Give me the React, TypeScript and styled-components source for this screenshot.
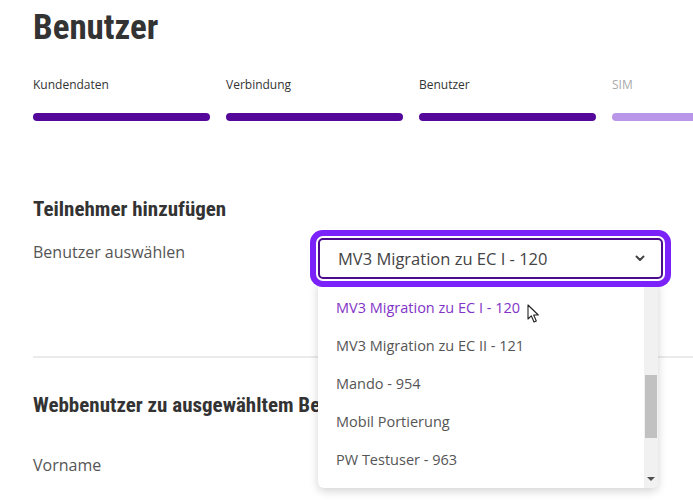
import React from 'react';
import styled, { createGlobalStyle } from 'styled-components';

const GlobalStyle = createGlobalStyle`
	html {
		overflow: hidden;
	}
	body {
		margin: 0;
		padding: 0;
		background: #fff;
		font-family: 'Open Sans', 'Liberation Sans', sans-serif;
		color: #555;
	}
`;

const condensed = `'Roboto Condensed', 'Liberation Sans Narrow', 'DejaVu Sans Condensed', 'Roboto', sans-serif`;

const Page = styled.div`
	width: 1000px;
	min-height: 501px;
	padding: 6px 0 0 33px;
	box-sizing: border-box;
`;

const PageTitle = styled.h1`
	margin: 0;
	font-family: ${condensed};
	font-weight: 700;
	font-size: 35px;
	line-height: 44px;
	color: #333;
`;

const Steps = styled.div`
	display: grid;
	grid-template-columns: repeat(4, 177px);
	column-gap: 16px;
	margin-top: 26px;
`;

const Step = styled.div<{ $done: boolean }>`
	display: flex;
	flex-direction: column;
	gap: 20px;
	font-size: 12px;
	line-height: 17px;
	color: ${(p) => (p.$done ? '#333' : '#aaa')};
`;

const StepBar = styled.div<{ $done: boolean }>`
	height: 8px;
	border-radius: 4px;
	background: ${(p) => (p.$done ? '#55079a' : '#ba96e8')};
`;

const SectionTitle = styled.h2<{ $top: number }>`
	margin: ${(p) => p.$top}px 0 0;
	font-family: ${condensed};
	font-weight: 700;
	font-size: 21px;
	line-height: 24px;
	color: #333;
`;

const FormRow = styled.div`
	display: grid;
	grid-template-columns: 285px 345px;
	align-items: start;
	margin-top: 14px;
`;

const FieldLabel = styled.div<{ $top?: number }>`
	font-size: 16px;
	line-height: 24px;
	color: #555;
	padding-top: ${(p) => p.$top ?? 5}px;
`;

const SelectWrap = styled.div`
	position: relative;
	margin-top: 3px;
`;

const SelectBox = styled.div`
	height: 41px;
	box-sizing: border-box;
	display: flex;
	align-items: center;
	justify-content: space-between;
	padding: 0 16px 0 18px;
	border: 2px solid #4c0b8e;
	border-radius: 5px;
	background: #fff;
	font-size: 16.5px;
	color: #444;
	box-shadow: 0 0 0 2px #fff, 0 0 0 8px #7b22fb;
	position: relative;
	z-index: 2;
`;

const Dropdown = styled.div`
	position: absolute;
	top: 43px;
	left: 0;
	width: 340px;
	height: 207px;
	display: flex;
	background: #fff;
	border-radius: 0 0 6px 6px;
	box-shadow: 0 3px 10px rgba(0, 0, 0, 0.18);
	z-index: 1;
	overflow: hidden;
`;

const OptionList = styled.ul`
	flex: 1;
	list-style: none;
	margin: 0;
	padding: 7px 0 0;
`;

const Option = styled.li<{ $active?: boolean }>`
	height: 38px;
	display: flex;
	align-items: center;
	padding-left: 18px;
	font-size: 14.5px;
	color: ${(p) => (p.$active ? '#8234c6' : '#555')};
	position: relative;
`;

const Scrollbar = styled.div`
	width: 14px;
	display: flex;
	flex-direction: column;
	align-items: center;
	background: #f1f1f1;
	padding-top: 94px;
`;

const Thumb = styled.div`
	width: 12px;
	height: 63px;
	background: #c1c1c1;
`;

const ArrowDown = styled.div`
	margin-top: auto;
	margin-bottom: 7px;
	width: 0;
	height: 0;
	border-left: 4px solid transparent;
	border-right: 4px solid transparent;
	border-top: 4px solid #505050;
`;

const Cursor = styled.svg`
	position: absolute;
	left: 209px;
	top: 16px;
`;

const Divider = styled.hr`
	margin: 77px 0 0;
	border: none;
	border-top: 2px solid #ebebeb;
`;

const Chevron = () => (
	<svg width="10" height="7" viewBox="0 0 10 7">
		<path d="M1.5 1.5 L5 5 L8.5 1.5" fill="none" stroke="#444" strokeWidth="2" strokeLinecap="round" strokeLinejoin="round" />
	</svg>
);

const steps = [
	{ label: 'Kundendaten', done: true },
	{ label: 'Verbindung', done: true },
	{ label: 'Benutzer', done: true },
	{ label: 'SIM', done: false },
];

const options = [
	'MV3 Migration zu EC I - 120',
	'MV3 Migration zu EC II - 121',
	'Mando - 954',
	'Mobil Portierung',
	'PW Testuser - 963',
];

const App = () => {
	return (
		<>
			<GlobalStyle />
			<Page>
				<PageTitle>Benutzer</PageTitle>
				<Steps>
					{steps.map((s) => (
						<Step key={s.label} $done={s.done}>
							{s.label}
							<StepBar $done={s.done} />
						</Step>
					))}
				</Steps>

				<SectionTitle $top={76}>Teilnehmer hinzufügen</SectionTitle>
				<FormRow>
					<FieldLabel>Benutzer auswählen</FieldLabel>
					<SelectWrap>
						<SelectBox>
							MV3 Migration zu EC I - 120
							<Chevron />
						</SelectBox>
						<Dropdown>
							<OptionList>
								{options.map((o, i) => (
									<Option key={o} $active={i === 0}>
										{o}
										{i === 0 && (
											<Cursor width="13" height="20" viewBox="0 0 13 20">
												<path d="M1 1 L1 15 L4.3 11.8 L7 18 L9.3 17 L6.7 11 L11.3 11 Z" fill="#fff" stroke="#222" strokeWidth="1.1" strokeLinejoin="round" />
											</Cursor>
										)}
									</Option>
								))}
							</OptionList>
							<Scrollbar>
								<Thumb />
								<ArrowDown />
							</Scrollbar>
						</Dropdown>
					</SelectWrap>
				</FormRow>

				<Divider />
				<SectionTitle $top={35}>Webbenutzer zu ausgewähltem Benutzer</SectionTitle>
				<FieldLabel $top={36}>Vorname</FieldLabel>
			</Page>
		</>
	);
};

export default App;
